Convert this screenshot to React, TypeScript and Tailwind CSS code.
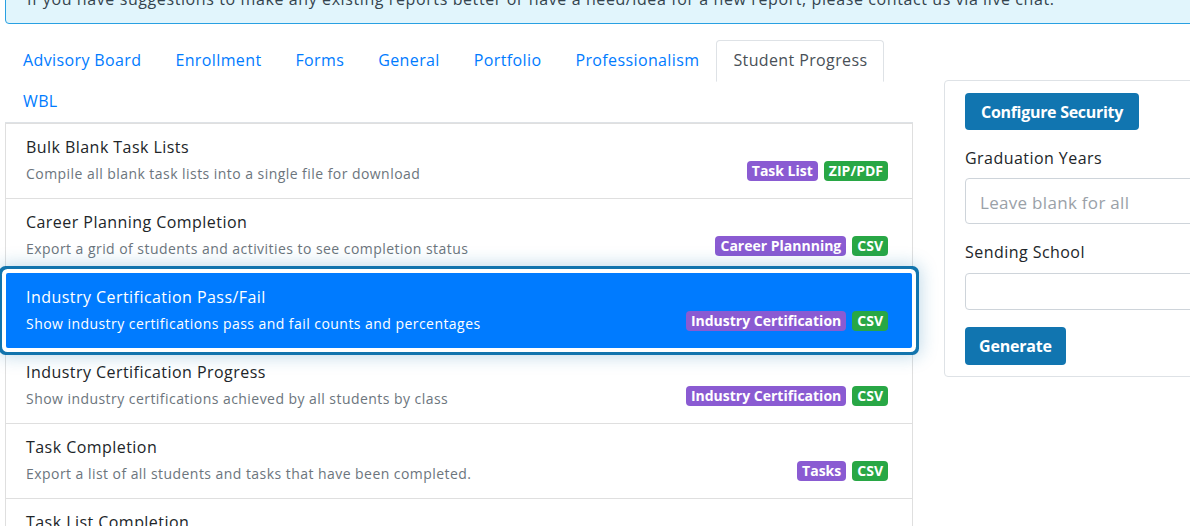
import React from "react";

type Report = {
  title: string;
  desc: string;
  category: string;
  format: string;
  active?: boolean;
};

const tabs = [
  "Advisory Board",
  "Enrollment",
  "Forms",
  "General",
  "Portfolio",
  "Professionalism",
  "Student Progress",
  "WBL",
];

const reports: Report[] = [
  {
    title: "Bulk Blank Task Lists",
    desc: "Compile all blank task lists into a single file for download",
    category: "Task List",
    format: "ZIP/PDF",
  },
  {
    title: "Career Planning Completion",
    desc: "Export a grid of students and activities to see completion status",
    category: "Career Plannning",
    format: "CSV",
  },
  {
    title: "Industry Certification Pass/Fail",
    desc: "Show industry certifications pass and fail counts and percentages",
    category: "Industry Certification",
    format: "CSV",
    active: true,
  },
  {
    title: "Industry Certification Progress",
    desc: "Show industry certifications achieved by all students by class",
    category: "Industry Certification",
    format: "CSV",
  },
  {
    title: "Task Completion",
    desc: "Export a list of all students and tasks that have been completed.",
    category: "Tasks",
    format: "CSV",
  },
  {
    title: "Task List Completion",
    desc: "Export task list completion for all students",
    category: "Task List",
    format: "CSV",
  },
];

function ReportItem({ report }: { report: Report }) {
  const active = report.active;
  return (
    <div
      className={`border-t border-[#dfdfdf] px-5 pt-[11px] pb-[14px] ${
        active
          ? "relative z-10 rounded-[2px] border-t-transparent bg-[#007bff] text-white shadow-[0_0_0_4px_#fff,0_0_0_7px_#1274ad,0_0_18px_8px_rgba(18,116,173,0.28)]"
          : "bg-white"
      }`}
    >
      <div
        className={`mb-1 text-[16px] leading-6 tracking-[0.45px] ${
          active ? "text-white" : "text-[#212529]"
        }`}
      >
        {report.title}
      </div>
      <div className="flex items-start justify-between">
        <span
          className={`text-[14px] leading-[21px] tracking-[0.45px] ${
            active ? "text-white" : "text-[#6c757d]"
          }`}
        >
          {report.desc}
        </span>
        <div className="-mt-[2px] mr-1 flex gap-[6px]">
          <span className="rounded bg-[#8a5bd2] px-[5px] text-[14px] font-bold leading-[20px] tracking-normal text-white">
            {report.category}
          </span>
          <span className="rounded bg-[#28a745] px-[5px] text-[14px] font-bold leading-[20px] tracking-normal text-white">
            {report.format}
          </span>
        </div>
      </div>
    </div>
  );
}

export default function App() {
  return (
    <div className="h-[526px] w-[1190px] overflow-hidden bg-white font-['Open_Sans','Noto_Sans',sans-serif] text-[#212529]">
      <div className="-mt-[26px] ml-[5px] mr-[-60px] whitespace-nowrap rounded border border-[#28a0e2] bg-[#e1f5fc] px-[21px] py-3 text-[16px] leading-6 tracking-[0.6px] text-[#34444e]">
        If you have suggestions to make any existing reports better or have a need/idea for a new report, please
        contact us via live chat.
      </div>

      <div className="mt-4 flex">
        <div className="ml-[5px] w-[908px] shrink-0">
          <ul className="flex flex-wrap border-b border-[#dee2e6] pl-px">
            {tabs.map((t) => (
              <li key={t} className="-mb-px">
                <span
                  className={`block rounded-t border px-4 pt-[7px] pb-[9px] text-[16px] leading-6 tracking-[0.38px] ${
                    t === "Student Progress"
                      ? "border-[#dee2e6] border-b-transparent bg-white text-[#495057]"
                      : "border-transparent text-[#007bff]"
                  }`}
                >
                  {t}
                </span>
              </li>
            ))}
          </ul>
          <div className="border-x border-b border-[#dfdfdf]">
            {reports.map((r) => (
              <ReportItem key={r.title} report={r} />
            ))}
          </div>
        </div>

        <div className="ml-[31px] mt-10 h-[297px] w-[290px] shrink-0 rounded border border-[#dee2e6] px-5 pt-3">
          <button className="h-[37px] rounded bg-[#1175b0] px-4 text-[16px] font-bold tracking-[-0.3px] text-white">
            Configure Security
          </button>
          <div className="mt-4 mb-2 text-[16px] leading-6 tracking-[0.45px] text-[#212529]">Graduation Years</div>
          <input
            className="h-[46px] w-full rounded border border-[#ced4da] px-[14px] pt-[3px] text-[17px] tracking-[0.3px] outline-none placeholder:text-[#9aa1a8]"
            placeholder="Leave blank for all"
          />
          <div className="mt-4 mb-[9px] text-[16px] leading-6 tracking-[0.45px] text-[#212529]">Sending School</div>
          <div className="h-[37px] w-full rounded border border-[#ced4da]" />
          <button className="mt-[17px] h-[38px] rounded bg-[#1175b0] px-[14px] text-[16px] font-bold tracking-[-0.2px] text-white">
            Generate
          </button>
        </div>
      </div>
    </div>
  );
}
